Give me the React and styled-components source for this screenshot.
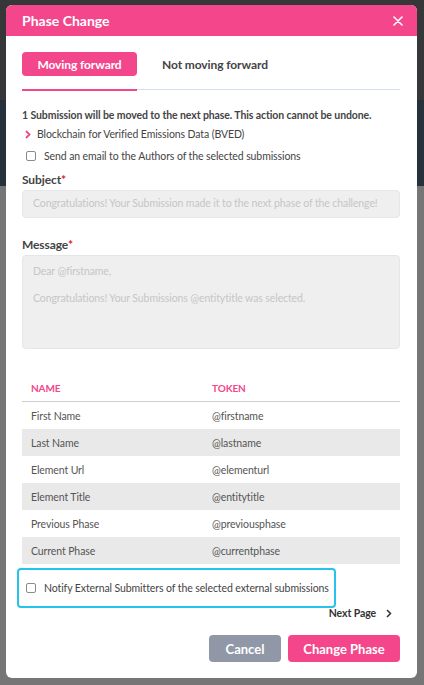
import React from "react";
import styled, { createGlobalStyle } from "styled-components";

const PINK = "#f3468b";
const FONT = `"Source Sans Pro", Lato, "Noto Sans", sans-serif`;
const SM = "10.5px";

const Global = createGlobalStyle`
  html, body { margin: 0; padding: 0; }
  body { font-family: ${FONT}; width: 424px; height: 685px; overflow: hidden; }
  * { box-sizing: border-box; }
`;

const Page = styled.div`
  position: relative;
  width: 424px;
  height: 685px;
  display: flex;
  flex-direction: column;
  background: #767676;
`;

const Band = styled.div`
  height: ${(p) => p.$h}px;
  background: ${(p) => p.$bg};
  flex-shrink: 0;
`;

const Modal = styled.div`
  position: absolute;
  left: 6px;
  top: 5px;
  width: 411px;
  height: 673px;
  background: #fff;
  border-radius: 6px;
  overflow: hidden;
  display: flex;
  flex-direction: column;
`;

const Header = styled.div`
  height: 31px;
  background: ${PINK};
  display: flex;
  align-items: center;
  justify-content: space-between;
  padding: 0 14px 0 16px;
  color: #fff;
  font-weight: 700;
  font-size: 14px;
`;

const Close = styled.button`
  border: 0;
  background: none;
  padding: 0;
  display: flex;
  cursor: pointer;
`;

const Body = styled.div`
  padding: 16px 17px 0 16px;
  display: flex;
  flex-direction: column;
  color: #444;
  letter-spacing: -0.1px;
`;

const Tabs = styled.div`
  display: flex;
  align-items: center;
  gap: 25px;
  border-bottom: 1px solid #d5dfea;
  padding-bottom: 13px;
  position: relative;
`;

const Tab = styled.div`
  height: 24px;
  width: ${(p) => (p.$active ? "115px" : "auto")};
  display: flex;
  align-items: center;
  justify-content: center;
  white-space: nowrap;
  border-radius: 4px;
  font-size: 12px;
  font-weight: 700;
  color: ${(p) => (p.$active ? "#fff" : "#444")};
  background: ${(p) => (p.$active ? PINK : "transparent")};
  position: relative;
  &::after {
    content: "";
    display: ${(p) => (p.$active ? "block" : "none")};
    position: absolute;
    left: 0;
    right: 0;
    bottom: -15px;
    height: 2px;
    background: ${PINK};
  }
`;

const Info = styled.div`
  margin-top: 18px;
  font-size: ${SM};
  font-weight: 700;
  color: #444;
  line-height: 14px;
  white-space: nowrap;
`;

const Item = styled.div`
  margin-top: 5px;
  display: flex;
  align-items: center;
  gap: 6px;
  padding-left: 3px;
  font-size: ${SM};
  color: #444;
  line-height: 14px;
`;

const CheckRow = styled.label`
  display: flex;
  align-items: center;
  gap: 8px;
  font-size: ${SM};
  color: #444;
  line-height: 14px;
  white-space: nowrap;
  margin-top: ${(p) => p.$mt || 0}px;
  padding-left: ${(p) => p.$pl || 0}px;
`;

const Box = styled.span`
  width: 10px;
  height: 10px;
  border: 1px solid #8a8a8a;
  border-radius: 2px;
  background: #fff;
  flex-shrink: 0;
`;

const Label = styled.div`
  margin-top: ${(p) => p.$mt}px;
  font-size: 12px;
  font-weight: 700;
  color: #444;
  line-height: 15px;
  span { color: #e0182d; }
`;

const Field = styled.div`
  margin-top: 3px;
  height: ${(p) => p.$h}px;
  background: #efefef;
  border: 1px solid #e3e6ea;
  border-radius: 4px;
  padding: ${(p) => (p.$multi ? "9px 10px" : "0 10px")};
  display: flex;
  flex-direction: column;
  justify-content: ${(p) => (p.$multi ? "flex-start" : "center")};
  color: #c6c6c6;
  font-size: ${SM};
  line-height: 13.5px;
  white-space: nowrap;
  overflow: hidden;
`;

const Table = styled.div`
  margin-top: 25px;
  display: flex;
  flex-direction: column;
`;

const Row = styled.div`
  display: grid;
  grid-template-columns: 181px 1fr;
  align-items: center;
  height: ${(p) => (p.$head ? 28 : 27)}px;
  padding-left: 9px;
  font-size: ${(p) => (p.$head ? "10px" : SM)};
  font-weight: ${(p) => (p.$head ? 700 : 400)};
  color: ${(p) => (p.$head ? PINK : "#555")};
  background: ${(p) => (p.$alt ? "#e9e9e9" : "transparent")};
  border-bottom: ${(p) => (p.$head ? "1px solid #cfcfcf" : "0")};
`;

const Notify = styled.div`
  margin-top: 4px;
  margin-left: -5px;
  width: 319px;
  height: 40px;
  border: 2px solid #27c3ee;
  border-radius: 4px;
  display: flex;
  align-items: center;
  padding-left: 7px;
`;

const NextPage = styled.div`
  align-self: flex-end;
  margin-top: -2px;
  margin-right: 8px;
  display: flex;
  align-items: center;
  gap: 10px;
  font-size: ${SM};
  font-weight: 700;
  color: #333;
  height: 14px;
`;

const Footer = styled.div`
  margin-top: 15px;
  display: flex;
  justify-content: flex-end;
  gap: 7px;
`;

const Button = styled.button`
  height: 27px;
  width: ${(p) => p.$w}px;
  padding: 0;
  border: 0;
  border-radius: 4px;
  background: ${(p) => (p.$primary ? PINK : "#9098a7")};
  color: #fff;
  font-family: ${FONT};
  font-weight: 700;
  font-size: 13px;
  cursor: pointer;
`;

const rows = [
  ["First Name", "@firstname"],
  ["Last Name", "@lastname"],
  ["Element Url", "@elementurl"],
  ["Element Title", "@entitytitle"],
  ["Previous Phase", "@previousphase"],
  ["Current Phase", "@currentphase"],
];

export default function App() {
  return (
    <>
      <Global />
      <Page>
        <Band $h={100} $bg="#363738" />
        <Band $h={86} $bg="#26313c" />
        <Band $h={499} $bg="#767676" />
        <Modal>
          <Header>
            Phase Change
            <Close aria-label="close">
              <svg width="10" height="10" viewBox="0 0 10 10">
                <path d="M1 1 L9 9 M9 1 L1 9" stroke="#fff" strokeWidth="1.6" strokeLinecap="round" />
              </svg>
            </Close>
          </Header>
          <Body>
            <Tabs>
              <Tab $active>Moving forward</Tab>
              <Tab>Not moving forward</Tab>
            </Tabs>
            <Info>1 Submission will be moved to the next phase. This action cannot be undone.</Info>
            <Item>
              <svg width="6" height="9" viewBox="0 0 6 9">
                <path d="M1 1 L4.5 4.5 L1 8" stroke={PINK} strokeWidth="1.8" fill="none" />
              </svg>
              Blockchain for Verified Emissions Data (BVED)
            </Item>
            <CheckRow $mt={8} $pl={4}>
              <Box />
              Send an email to the Authors of the selected submissions
            </CheckRow>
            <Label $mt={9}>
              Subject<span>*</span>
            </Label>
            <Field $h={28}>Congratulations! Your Submission made it to the next phase of the challenge!</Field>
            <Label $mt={19}>
              Message<span>*</span>
            </Label>
            <Field $h={94} $multi>
              <div>Dear @firstname,</div>
              <div>&nbsp;</div>
              <div>Congratulations! Your Submissions @entitytitle was selected.</div>
            </Field>
            <Table>
              <Row $head>
                <span>NAME</span>
                <span>TOKEN</span>
              </Row>
              {rows.map(([n, t], i) => (
                <Row key={n} $alt={i % 2 === 1}>
                  <span>{n}</span>
                  <span>{t}</span>
                </Row>
              ))}
            </Table>
            <Notify>
              <CheckRow>
                <Box />
                Notify External Submitters of the selected external submissions
              </CheckRow>
            </Notify>
            <NextPage>
              Next Page
              <svg width="6" height="9" viewBox="0 0 6 9">
                <path d="M1 1 L4.5 4.5 L1 8" stroke="#333" strokeWidth="1.5" fill="none" />
              </svg>
            </NextPage>
            <Footer>
              <Button $w={72}>Cancel</Button>
              <Button $primary $w={112}>Change Phase</Button>
            </Footer>
          </Body>
        </Modal>
      </Page>
    </>
  );
}
